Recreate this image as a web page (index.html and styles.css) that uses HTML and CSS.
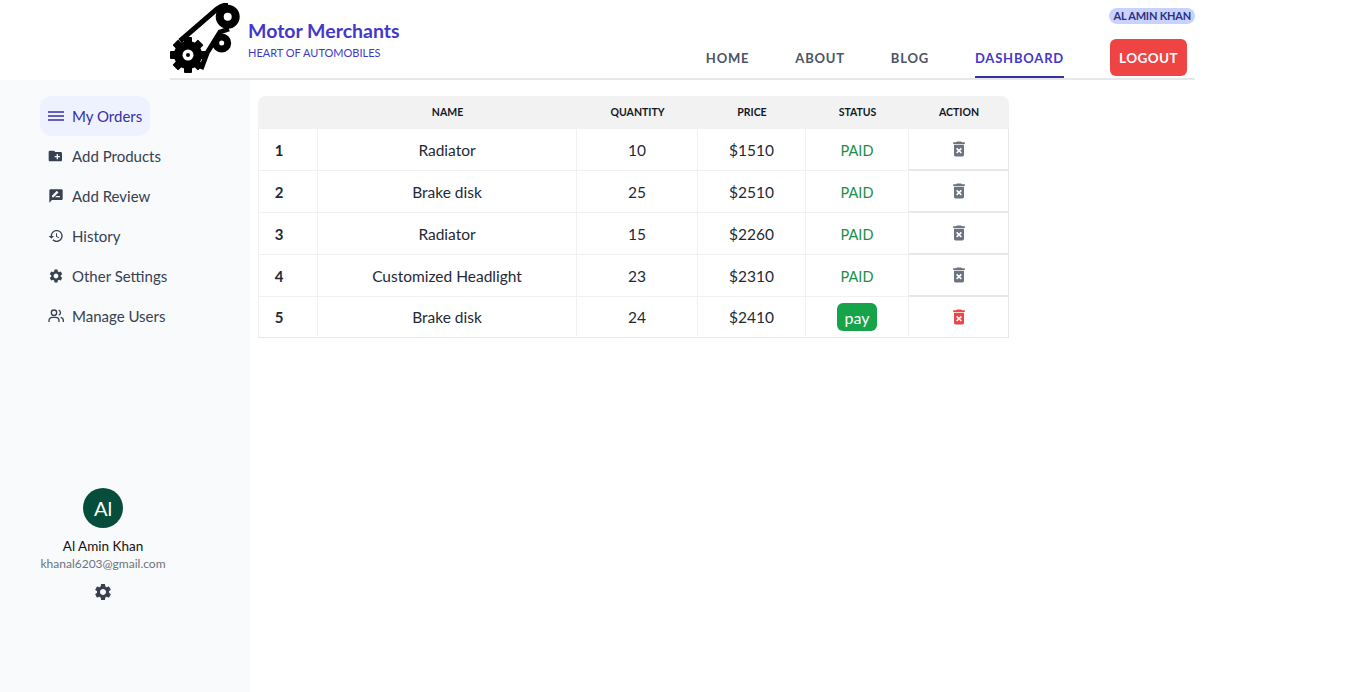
FILE: index.html
```html
<!DOCTYPE html>
<html lang="en">
<head>
  <meta charset="UTF-8" />
  <meta name="viewport" content="width=device-width, initial-scale=1" />
  <title>Motor Merchants</title>
  <link rel="stylesheet" href="styles.css">
</head>
<body>
  <svg class="icon-defs" aria-hidden="true">
    <symbol id="gear" viewBox="0 0 24 24"><path d="M19.14 12.94c.04-.3.06-.61.06-.94 0-.32-.02-.64-.07-.94l2.03-1.58c.18-.14.23-.41.12-.61l-1.92-3.32c-.12-.22-.37-.29-.59-.22l-2.39.96c-.5-.38-1.03-.7-1.62-.94l-.36-2.54c-.04-.24-.24-.41-.48-.41h-3.84c-.24 0-.43.17-.47.41l-.36 2.54c-.59.24-1.13.57-1.62.94l-2.39-.96c-.22-.08-.47 0-.59.22L2.74 8.87c-.12.21-.08.47.12.61l2.03 1.58c-.05.3-.09.63-.09.94s.02.64.07.94l-2.03 1.58c-.18.14-.23.41-.12.61l1.92 3.32c.12.22.37.29.59.22l2.39-.96c.5.38 1.03.7 1.62.94l.36 2.54c.05.24.24.41.48.41h3.84c.24 0 .44-.17.47-.41l.36-2.54c.59-.24 1.13-.56 1.62-.94l2.39.96c.22.08.47 0 .59-.22l1.92-3.32c.12-.22.07-.47-.12-.61l-2.01-1.58zM12 15.6c-1.98 0-3.6-1.62-3.6-3.6s1.62-3.6 3.6-3.6 3.6 1.62 3.6 3.6-1.62 3.6-3.6 3.6z"/></symbol>
    <symbol id="trash" viewBox="0 0 24 24"><path d="M6 19c0 1.1.9 2 2 2h8c1.1 0 2-.9 2-2V7H6v12zm2.46-7.12l1.41-1.41L12 12.59l2.12-2.12 1.41 1.41L13.41 14l2.12 2.12-1.41 1.41L12 15.41l-2.12 2.12-1.41-1.41L10.59 14l-2.13-2.12zM15.5 4l-1-1h-5l-1 1H5v2h14V4z"/></symbol>
  </svg>

  <header class="topbar">
    <a class="brand" href="#">
      <svg class="logo" viewBox="0 0 72 72">
        <!-- belt -->
        <path d="M10 38 L47 6 Q52 2 58 2 M59 26 L50 29 L37 50 L31 66" fill="none" stroke="#000" stroke-width="5"/>
        <!-- big pulley -->
        <circle cx="57.7" cy="13.7" r="8" fill="none" stroke="#000" stroke-width="8"/>
        <!-- small pulley -->
        <circle cx="51.7" cy="40" r="6" fill="none" stroke="#000" stroke-width="7"/>
        <!-- gear -->
        <g transform="translate(18 52)">
          <circle r="14"/>
          <rect x="-4" y="-18" width="8" height="36" rx="1"/>
          <rect x="-4" y="-18" width="8" height="36" rx="1" transform="rotate(45)"/>
          <rect x="-4" y="-18" width="8" height="36" rx="1" transform="rotate(90)"/>
          <rect x="-4" y="-18" width="8" height="36" rx="1" transform="rotate(135)"/>
          <circle r="5.5" fill="#fff"/>
          <circle r="2"/>
        </g>
      </svg>
      <span class="brand-text">
        <span class="brand-name">Motor Merchants</span>
        <span class="brand-tag">HEART OF AUTOMOBILES</span>
      </span>
    </a>
    <div class="topbar-right">
      <span class="user-badge">AL AMIN KHAN</span>
      <nav class="main-nav">
        <a href="#">HOME</a>
        <a href="#">ABOUT</a>
        <a href="#">BLOG</a>
        <a href="#" class="active">DASHBOARD</a>
        <button class="logout" type="button">LOGOUT</button>
      </nav>
    </div>
  </header>

  <div class="layout">
    <aside class="sidebar">
      <ul class="side-menu">
        <li class="active">
          <svg class="side-icon" viewBox="0 0 24 24"><path d="M0 5h24v2.2H0zM0 10.9h24v2.2H0zM0 16.8h24V19H0z"/></svg>
          My Orders
        </li>
        <li>
          <svg class="side-icon" viewBox="0 0 24 24"><path d="M20 6h-8l-2-2H4c-1.1 0-2 .9-2 2v12c0 1.1.9 2 2 2h16c1.1 0 2-.9 2-2V8c0-1.1-.9-2-2-2zm-1 8h-3v3h-2v-3h-3v-2h3V9h2v3h3v2z" transform="translate(-1 0)"/></svg>
          Add Products
        </li>
        <li>
          <svg class="side-icon" viewBox="0 0 24 24"><path d="M20 2H4c-1.1 0-1.99.9-1.99 2L2 22l4-4h14c1.1 0 2-.9 2-2V4c0-1.1-.9-2-2-2zM6 14v-2.47l6.88-6.88c.2-.2.51-.2.71 0l1.77 1.77c.2.2.2.51 0 .71L8.47 14H6zm12 0h-7.5l2-2H18v2z"/></svg>
          Add Review
        </li>
        <li>
          <svg class="side-icon" viewBox="0 0 24 24"><path d="M13 3c-4.97 0-9 4.03-9 9H1l3.89 3.89.07.14L9 12H6c0-3.87 3.13-7 7-7s7 3.13 7 7-3.13 7-7 7c-1.93 0-3.68-.79-4.94-2.06l-1.42 1.42C8.27 19.99 10.51 21 13 21c4.97 0 9-4.03 9-9s-4.03-9-9-9zm-1 5v5l4.28 2.54.72-1.21-3.5-2.08V8H12z"/></svg>
          History
        </li>
        <li>
          <svg class="side-icon"><use href="#gear"/></svg>
          Other Settings
        </li>
        <li>
          <svg class="side-icon outline" viewBox="0 0 24 24"><circle cx="9" cy="7" r="4"/><path d="M1.5 21v-2a5 5 0 0 1 5-5h5a5 5 0 0 1 5 5v2M16 3.2a4 4 0 0 1 0 7.6M23 21v-2a5 5 0 0 0-4-4.8"/></svg>
          Manage Users
        </li>
      </ul>

      <div class="profile">
        <div class="avatar">Al</div>
        <div class="profile-name">Al Amin Khan</div>
        <div class="profile-mail">khanal6203@gmail.com</div>
        <svg class="profile-gear"><use href="#gear"/></svg>
      </div>
    </aside>

    <main class="content">
      <table class="orders">
        <thead>
          <tr>
            <th class="col-no"></th>
            <th class="col-name">NAME</th>
            <th class="col-qty">QUANTITY</th>
            <th class="col-price">PRICE</th>
            <th class="col-status">STATUS</th>
            <th class="col-action">ACTION</th>
          </tr>
        </thead>
        <tbody>
          <tr>
            <td class="no">1</td><td>Radiator</td><td>10</td><td>$1510</td>
            <td class="paid">PAID</td>
            <td class="action"><svg class="trash"><use href="#trash"/></svg></td>
          </tr>
          <tr>
            <td class="no">2</td><td>Brake disk</td><td>25</td><td>$2510</td>
            <td class="paid">PAID</td>
            <td class="action"><svg class="trash"><use href="#trash"/></svg></td>
          </tr>
          <tr>
            <td class="no">3</td><td>Radiator</td><td>15</td><td>$2260</td>
            <td class="paid">PAID</td>
            <td class="action"><svg class="trash"><use href="#trash"/></svg></td>
          </tr>
          <tr>
            <td class="no">4</td><td>Customized Headlight</td><td>23</td><td>$2310</td>
            <td class="paid">PAID</td>
            <td class="action"><svg class="trash"><use href="#trash"/></svg></td>
          </tr>
          <tr>
            <td class="no">5</td><td>Brake disk</td><td>24</td><td>$2410</td>
            <td><button class="pay" type="button">pay</button></td>
            <td class="action"><svg class="trash red"><use href="#trash"/></svg></td>
          </tr>
        </tbody>
      </table>
    </main>
  </div>
</body>
</html>
```

FILE: styles.css
```css
* {
  box-sizing: border-box;
}
html, body {
  height: 100%;
}
body {
  margin: 0;
  font-family: "Lato", "Noto Sans", sans-serif;
  font-size: 16px;
  color: #1f2937;
  background-color: #fff;
  overflow: hidden;
}
a {
  text-decoration: none;
  color: inherit;
}
.icon-defs {
  display: none;
}

/* top bar */
.topbar {
  display: flex;
  justify-content: space-between;
  width: 1025px;
  height: 80px;
  margin-left: 170px;
  border-bottom: 2px solid #e5e7eb;
}
.brand {
  display: flex;
  align-items: flex-start;
  gap: 6px;
}
.logo {
  width: 72px;
  height: 72px;
  margin-top: 3px;
}
.brand-text {
  display: flex;
  flex-direction: column;
  padding-top: 18px;
}
.brand-name {
  font-size: 19.5px;
  line-height: 26px;
  font-weight: 700;
  color: #4338ca;
}
.brand-tag {
  font-size: 11px;
  line-height: 16px;
  margin-top: 1px;
  color: #4338ca;
}
.topbar-right {
  display: flex;
  flex-direction: column;
  align-items: flex-end;
  padding-top: 8px;
}
.user-badge {
  height: 16px;
  padding: 0 4px;
  border-radius: 8px;
  background-color: #c7d2fe;
  color: #312e81;
  font-size: 11px;
  line-height: 16px;
  font-weight: 700;
  letter-spacing: -0.2px;
}
.main-nav {
  display: flex;
  align-items: flex-start;
  gap: 46px;
  margin-top: 15px;
  margin-right: 8px;
}
.main-nav a {
  display: block;
  height: 39px;
  padding-top: 11px;
  font-size: 13px;
  line-height: 17px;
  font-weight: 700;
  letter-spacing: 0.8px;
  color: #4b5563;
}
.main-nav a.active {
  color: #4338ca;
  border-bottom: 2px solid #3730a3;
}
.logout {
  width: 77px;
  height: 37px;
  border: none;
  border-radius: 6px;
  background-color: #ef4444;
  color: #fff;
  font-family: inherit;
  font-size: 13.5px;
  font-weight: 700;
  letter-spacing: 0.4px;
}

/* page body */
.layout {
  display: flex;
  height: calc(100% - 80px);
}
.sidebar {
  display: flex;
  flex-direction: column;
  width: 250px;
  padding: 16px 0 0 40px;
  background-color: #f9fafc;
}
.side-menu {
  list-style: none;
  margin: 0;
  padding: 0;
}
.side-menu li {
  display: flex;
  align-items: center;
  gap: 8px;
  width: fit-content;
  height: 40px;
  padding: 0 8px;
  border-radius: 12px;
  font-size: 15px;
  color: #374151;
}
.side-menu li.active {
  background-color: #eef2ff;
  color: #3730a3;
}
.side-icon {
  width: 16px;
  height: 16px;
  fill: currentColor;
}
.side-icon.outline {
  fill: none;
  stroke: currentColor;
  stroke-width: 2;
}
.profile {
  display: flex;
  flex-direction: column;
  align-items: center;
  width: 126px;
  margin-top: 152px;
}
.avatar {
  width: 40px;
  height: 40px;
  border-radius: 50%;
  background-color: #064e3b;
  color: #fff;
  font-size: 20px;
  line-height: 40px;
  text-align: center;
}
.profile-name {
  margin-top: 9px;
  font-size: 13.5px;
  line-height: 18px;
  color: #111;
}
.profile-mail {
  font-size: 12px;
  line-height: 18px;
  color: #6b7280;
}
.profile-gear {
  width: 20px;
  height: 20px;
  margin-top: 9px;
  fill: #374151;
}

/* orders table */
.content {
  padding: 16px 0 0 8px;
}
.orders {
  width: 751px;
  table-layout: fixed;
  border-collapse: separate;
  border-spacing: 0;
}
.orders th {
  height: 33px;
  padding: 0 0 1px;
  background-color: #f2f2f2;
  font-size: 10.5px;
  font-weight: 700;
  color: #111827;
}
.orders th:first-child {
  border-top-left-radius: 8px;
}
.orders th:last-child {
  border-top-right-radius: 8px;
}
.col-no { width: 60px; }
.col-name { width: 259px; }
.col-qty { width: 121px; }
.col-price { width: 108px; }
.col-status { width: 103px; }
.col-action { width: 100px; }
.orders td {
  height: 42px;
  padding: 0;
  font-size: 15.5px;
  text-align: center;
  border-bottom: 1px solid #f1f1f1;
  border-right: 1px solid #f1f1f1;
}
.orders td:first-child {
  border-left: 1px solid #f1f1f1;
}
.orders tbody tr:last-child td {
  height: 41px;
  border-bottom-color: #e5e7eb;
}
.orders td.no {
  padding-right: 18px;
  font-size: 15px;
  font-weight: 700;
}
.orders td.paid {
  padding-top: 1px;
  font-size: 14.5px;
  color: #1a8f45;
}
.orders td.action {
  border-right: 1px solid #e5e7eb;
  border-bottom: 2px solid #e5e7eb;
}
.orders tbody tr:last-child td.action {
  border-bottom-width: 1px;
}
.trash {
  display: block;
  width: 20px;
  height: 20px;
  margin: 0 auto;
  fill: #6b7280;
}
.trash.red {
  fill: #ef4444;
}
.pay {
  width: 40px;
  height: 28px;
  padding: 0;
  border: none;
  border-radius: 6px;
  background-color: #16a34a;
  color: #fff;
  font-family: inherit;
  font-size: 16px;
  vertical-align: middle;
}
```
